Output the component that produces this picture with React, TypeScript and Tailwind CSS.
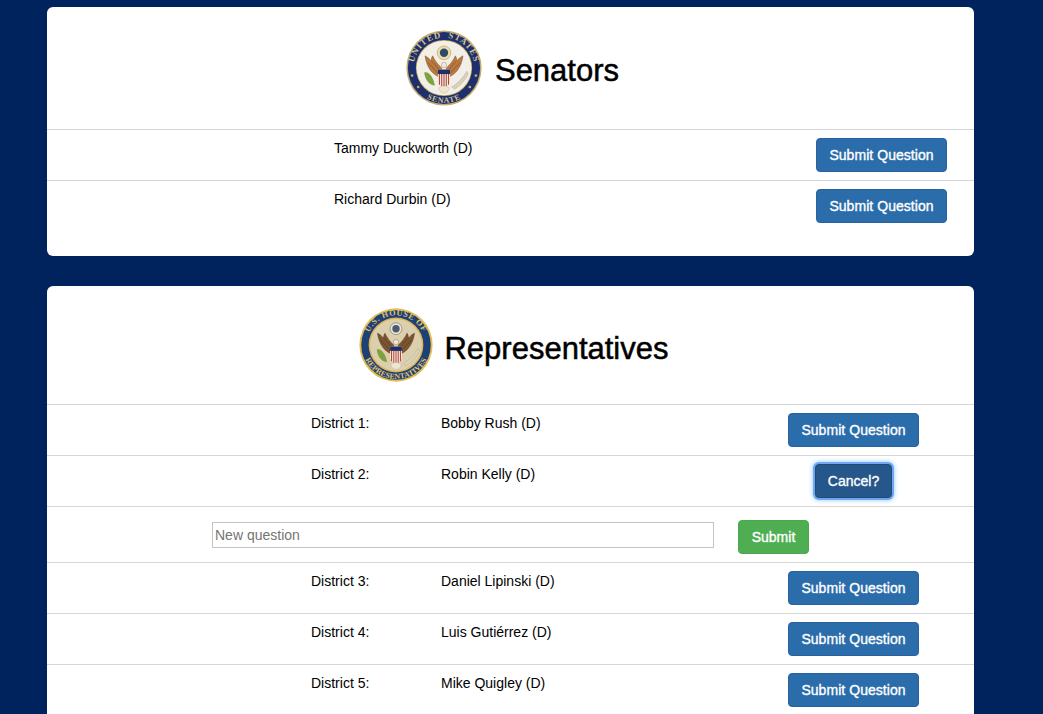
const senators = ["Tammy Duckworth (D)", "Richard Durbin (D)"];

const representatives = [
  { district: "District 1:", name: "Bobby Rush (D)" },
  { district: "District 2:", name: "Robin Kelly (D)", open: true },
  { district: "District 3:", name: "Daniel Lipinski (D)" },
  { district: "District 4:", name: "Luis Gutiérrez (D)" },
  { district: "District 5:", name: "Mike Quigley (D)" },
];

const SubmitButton = () => (
  <button className="w-[131px] h-[34px] rounded border border-[#2a62a0] bg-[#2b6cab] text-white text-sm [-webkit-text-stroke:0.35px_white] tracking-[0.05px]">
    Submit Question
  </button>
);

const Eagle = ({ wing, dark }: { wing: string; dark: string }) => (
  <g>
    {/* wings */}
    <path d="M45 62 C36 60 27 50 25 34 C29 36 31 38 33 41 C33 38 34 36 35 34 C38 40 42 46 47 50 Z" fill={wing} stroke={dark} strokeWidth="0.6" />
    <path d="M55 62 C64 60 73 50 75 34 C71 36 69 38 67 41 C67 38 66 36 65 34 C62 40 58 46 53 50 Z" fill={wing} stroke={dark} strokeWidth="0.6" />
    <path d="M29 43 L43 58 M34 41 L45 54 M71 43 L57 58 M66 41 L55 54" stroke={dark} strokeWidth="0.8" fill="none" />
    {/* head */}
    <circle cx="50" cy="46" r="3.5" fill="#f1ead8" stroke={dark} strokeWidth="0.4" />
    {/* shield */}
    <path d="M42 52 H58 V66 C58 71 54 74 50 75 C46 74 42 71 42 66 Z" fill="#f3ece0" />
    <path d="M42 52 H58 V58 H42 Z" fill="#1f2f66" />
    <path d="M44 58 V72 M47 58 V74 M50 58 V75 M53 58 V74 M56 58 V72" stroke="#b5413a" strokeWidth="1.4" />
    {/* tail */}
    <path d="M43 76 C47 73 53 73 57 76 C57 80 53 83 50 83 C47 83 43 80 43 76 Z" fill="#efe6d2" stroke="#a99a7c" strokeWidth="0.4" />
    {/* olive branch, arrows */}
    <path d="M24 56 C30 54 36 62 38 73 C31 73 25 66 24 56 Z" fill="#7ea23e" />
    <path d="M80 54 C76 62 68 70 60 75 L64 78 C71 74 78 66 82 58 Z" fill="#d9d0b8" stroke="#a99a7c" strokeWidth="0.4" />
  </g>
);

const SenateSeal = () => (
  <svg viewBox="0 0 100 100" className="w-[76px] h-[76px] shrink-0">
    <circle cx="50" cy="50" r="49.5" fill="#c4ab6d" />
    <circle cx="50" cy="50" r="47.5" fill="#1d2f6c" />
    <circle cx="50" cy="50" r="37" fill="#c9a95c" />
    <circle cx="50" cy="50" r="36" fill="#f2efe8" />
    <circle cx="50" cy="30" r="9" fill="#e9dfae" stroke="#c9a95c" />
    <circle cx="50" cy="30" r="5.5" fill="#2f4a6b" />
    <Eagle wing="#b9793f" dark="#7a4a22" />
    <defs>
      <path id="senate-top" d="M10 50 A40 40 0 0 1 90 50" />
      <path id="senate-bottom" d="M4 50 A46 46 0 0 0 96 50" />
    </defs>
    <text fill="#d8c58e" fontFamily="Liberation Serif, serif" fontWeight="700" fontSize="11.5" letterSpacing="1.3">
      <textPath href="#senate-top" startOffset="50%" textAnchor="middle">UNITED&#160;&#160;STATES</textPath>
    </text>
    <text fill="#d8c58e" fontFamily="Liberation Serif, serif" fontWeight="700" fontSize="10.5" letterSpacing="1">
      <textPath href="#senate-bottom" startOffset="50%" textAnchor="middle">SENATE</textPath>
    </text>
    <circle cx="8" cy="60" r="1.8" fill="#c9a95c" />
    <circle cx="92" cy="60" r="1.8" fill="#c9a95c" />
    <circle cx="16" cy="75" r="1.8" fill="#c9a95c" />
    <circle cx="84" cy="75" r="1.8" fill="#c9a95c" />
  </svg>
);

const HouseSeal = () => (
  <svg viewBox="0 0 100 100" className="w-[74px] h-[74px] shrink-0">
    <circle cx="50" cy="50" r="49.5" fill="#e3bf55" />
    <circle cx="50" cy="50" r="47" fill="#1d4076" />
    <circle cx="50" cy="50" r="37" fill="#dcb552" />
    <circle cx="50" cy="50" r="35" fill="#dccfae" />
    <circle cx="50" cy="28" r="8" fill="#ece6d4" stroke="#8a8070" />
    <circle cx="50" cy="28" r="5" fill="#4a5a72" />
    <Eagle wing="#7d5632" dark="#4a3018" />
    <defs>
      <path id="house-top" d="M10 50 A40 40 0 0 1 90 50" />
      <path id="house-bottom" d="M4 50 A46 46 0 0 0 96 50" />
    </defs>
    <text fill="#e3c56c" fontFamily="Liberation Serif, serif" fontWeight="700" fontSize="11" letterSpacing="0.9">
      <textPath href="#house-top" startOffset="50%" textAnchor="middle">U.S. HOUSE OF</textPath>
    </text>
    <text fill="#e3c56c" fontFamily="Liberation Serif, serif" fontWeight="700" fontSize="10.5" letterSpacing="0.2">
      <textPath href="#house-bottom" startOffset="50%" textAnchor="middle">REPRESENTATIVES</textPath>
    </text>
  </svg>
);

export default function App() {
  return (
    <div className="h-[714px] overflow-hidden bg-[#00235e] pt-[7px] pl-[47px] font-['Liberation_Sans',Arial,sans-serif] text-sm text-black">
      <div className="w-[927px] h-[249px] rounded-md bg-white">
        <div className="h-[123px] flex items-center justify-center pl-[4px] gap-[13px] border-b border-[#d6d6d6]">
          <SenateSeal />
          <h2 className="text-[31px] leading-none [-webkit-text-stroke:0.5px_black] mt-[4px]">Senators</h2>
        </div>
        {senators.map((name, i) => (
          <div
            key={name}
            className={`h-[51px] flex justify-between pt-2 pl-[287px] pr-[27px] ${i === 0 ? "border-b border-[#d6d6d6]" : ""}`}
          >
            <span className="leading-5">{name}</span>
            <SubmitButton />
          </div>
        ))}
      </div>

      <div className="w-[927px] mt-[30px] pb-6 rounded-md bg-white">
        <div className="h-[119px] flex items-center justify-center pl-[7px] gap-[11px] border-b border-[#d6d6d6]">
          <HouseSeal />
          <h2 className="text-[31px] leading-none [-webkit-text-stroke:0.5px_black] mt-[6px]">Representatives</h2>
        </div>
        {representatives.map((rep) => (
          <div key={rep.district}>
            <div className="h-[51px] flex pt-2 pl-[264px] pr-[55px] border-b border-[#d6d6d6]">
              <span className="w-[130px] leading-5">{rep.district}</span>
              <span className="leading-5">{rep.name}</span>
              <div className="ml-auto w-[131px] flex justify-center">
                {rep.open ? (
                  <button className="w-[77px] h-[34px] rounded border border-[#1f4a78] bg-[#25578a] text-white text-sm [-webkit-text-stroke:0.35px_white] ring-2 ring-[#6ea8f5] shadow-[0_0_5px_2px_#8fc0fa]">
                    Cancel?
                  </button>
                ) : (
                  <SubmitButton />
                )}
              </div>
            </div>
            {rep.open && (
              <div className="h-[56px] flex items-start pt-[13px] pl-[165px] border-b border-[#d6d6d6]">
                <input
                  placeholder="New question"
                  className="mt-[2px] w-[502px] h-[26px] border border-[#c4c4c4] px-[2px] text-sm placeholder:text-[#757575] outline-none"
                />
                <button className="ml-[24px] w-[71px] h-[34px] rounded border border-[#4aa84d] bg-[#4fae52] text-white text-sm [-webkit-text-stroke:0.35px_white]">
                  Submit
                </button>
              </div>
            )}
          </div>
        ))}
      </div>
    </div>
  );
}
